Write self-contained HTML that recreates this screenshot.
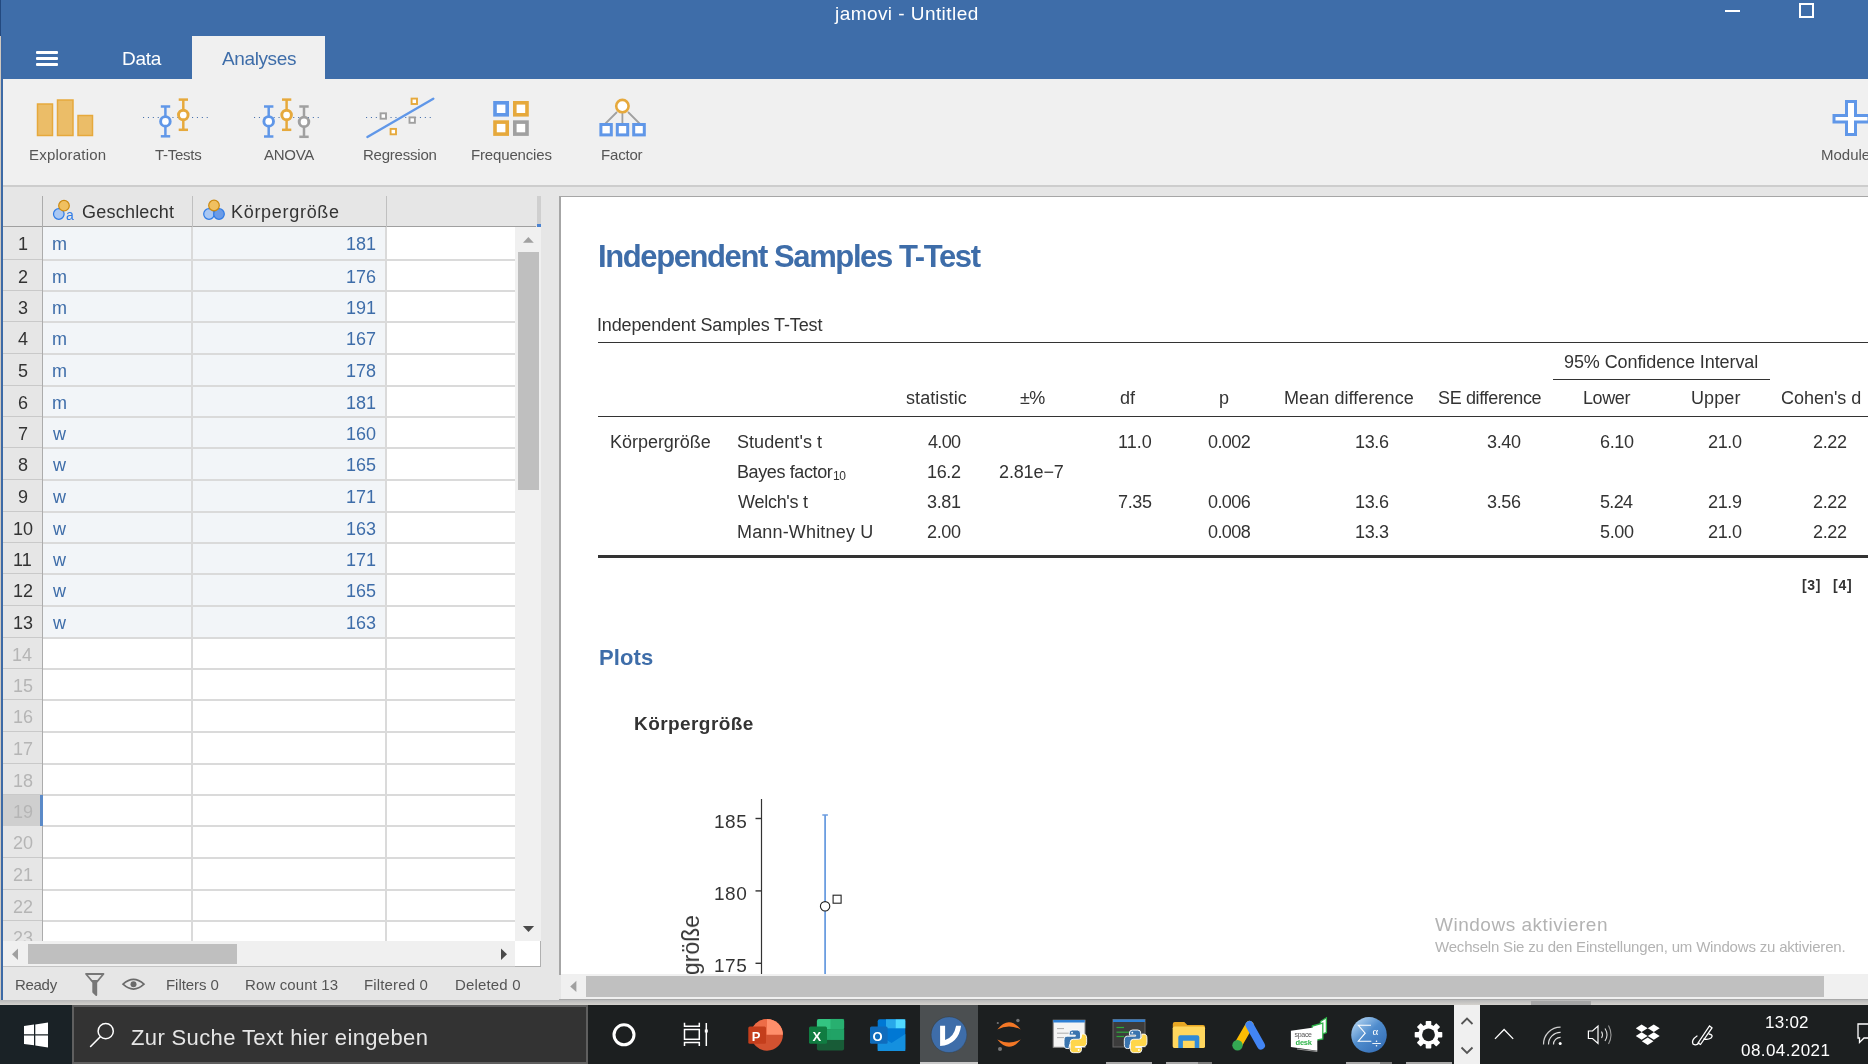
<!DOCTYPE html>
<html><head><meta charset="utf-8">
<style>
*{margin:0;padding:0;box-sizing:border-box}
html,body{width:1868px;height:1064px;overflow:hidden;background:#e6e6e6;font-family:"Liberation Sans",sans-serif;position:relative}
.a{position:absolute}
.t{position:absolute;white-space:nowrap;line-height:1;will-change:transform}
svg{position:absolute;overflow:visible}
</style></head><body>

<div class="a" style="left:0;top:0;width:1868px;height:79px;background:#3e6da9"></div>
<div class="a" style="left:0;top:0;width:1px;height:36px;background:#23497f"></div>
<div class="t" style="left:834.50px;top:4px;font-size:19px;color:#fff;letter-spacing:0.438px">jamovi - Untitled</div>
<div class="a" style="left:1725px;top:10px;width:15px;height:2px;background:#fff"></div>
<div class="a" style="left:1799px;top:3px;width:15px;height:15px;border:2px solid #fff"></div>
<div class="a" style="left:36px;top:51px;width:22px;height:3px;background:#fff;border-radius:1px"></div>
<div class="a" style="left:36px;top:57px;width:22px;height:3px;background:#fff;border-radius:1px"></div>
<div class="a" style="left:36px;top:63px;width:22px;height:3px;background:#fff;border-radius:1px"></div>
<div class="t" style="left:122.10px;top:49px;font-size:19px;color:#fff;letter-spacing:-0.233px">Data</div>
<div class="a" style="left:192px;top:36px;width:133px;height:44px;background:#f0f0f0"></div>
<div class="t" style="left:222.00px;top:49px;font-size:19px;color:#3e6da9;letter-spacing:-0.386px">Analyses</div>
<div class="a" style="left:3px;top:79px;width:1865px;height:106px;background:#f0f0f0"></div>
<div class="a" style="left:3px;top:185px;width:1865px;height:2px;background:#cdcdcd"></div>
<svg class="a" style="left:0;top:0" width="1868" height="186" viewBox="0 0 1868 186">
<g fill="#ebbd68" stroke="#e6a93c" stroke-width="1.5">
<rect x="37.5" y="104" width="15" height="31.5"/>
<rect x="57.5" y="100" width="15.5" height="35.5"/>
<rect x="78" y="115.5" width="14.5" height="20"/>
</g>
<!-- t-tests -->
<line x1="143" y1="117.5" x2="210" y2="117.5" stroke="#4a72ac" stroke-width="1.1" stroke-dasharray="1.1 3.8"/>
<g stroke="#6097e8" stroke-width="2.5" fill="#fff">
<line x1="165.4" y1="106" x2="165.4" y2="137"/><line x1="160.8" y1="106.5" x2="170.2" y2="106.5"/><line x1="160.8" y1="136.3" x2="170.2" y2="136.3"/>
<circle cx="165.4" cy="121.4" r="4.8" stroke-width="2.9"/>
</g>
<g stroke="#e6a93c" stroke-width="2.5" fill="#fff">
<line x1="183.3" y1="99" x2="183.3" y2="130.5"/><line x1="178.7" y1="99.6" x2="188" y2="99.6"/><line x1="178.7" y1="129.8" x2="188" y2="129.8"/>
<circle cx="183.3" cy="115" r="4.8" stroke-width="2.9"/>
</g>
<!-- anova -->
<line x1="254" y1="117.5" x2="321" y2="117.5" stroke="#4a72ac" stroke-width="1.1" stroke-dasharray="1.1 3.8"/>
<g stroke="#6097e8" stroke-width="2.5" fill="#fff">
<line x1="268.7" y1="106" x2="268.7" y2="137"/><line x1="264" y1="106.5" x2="273.4" y2="106.5"/><line x1="264" y1="136.5" x2="273.4" y2="136.5"/>
<circle cx="268.7" cy="121.4" r="4.8" stroke-width="2.9"/>
</g>
<g stroke="#e6a93c" stroke-width="2.5" fill="#fff">
<line x1="286.6" y1="99" x2="286.6" y2="130.5"/><line x1="282" y1="99.6" x2="291.3" y2="99.6"/><line x1="282" y1="129.8" x2="291.3" y2="129.8"/>
<circle cx="286.6" cy="115" r="4.8" stroke-width="2.9"/>
</g>
<g stroke="#a0a0a0" stroke-width="2.5" fill="#fff">
<line x1="304" y1="106" x2="304" y2="137.5"/><line x1="299.3" y1="106.5" x2="308.7" y2="106.5"/><line x1="299.3" y1="136.8" x2="308.7" y2="136.8"/>
<circle cx="304" cy="121.9" r="4.8" stroke-width="2.9"/>
</g>
<!-- regression -->
<line x1="366" y1="117.5" x2="434" y2="117.5" stroke="#4a72ac" stroke-width="1.1" stroke-dasharray="1.1 3.8"/>
<g fill="#fff" stroke-width="1.9">
<rect x="380.6" y="113.3" width="5.4" height="5.4" stroke="#a0a0a0"/>
<rect x="409.5" y="117.4" width="5.4" height="5.4" stroke="#a0a0a0"/>
<rect x="411.6" y="98.6" width="5.4" height="5.4" stroke="#e6a93c"/>
<rect x="390.6" y="128.9" width="5.4" height="5.4" stroke="#e6a93c"/>
</g>
<line x1="367.4" y1="137" x2="433.3" y2="98.7" stroke="#6097e8" stroke-width="2.4" stroke-linecap="round"/>
<!-- frequencies -->
<g fill="#fff" stroke-width="3.6">
<rect x="495" y="102.8" width="12.2" height="12" stroke="#6097e8"/>
<rect x="514.8" y="102.8" width="12.2" height="12" stroke="#e6a93c"/>
<rect x="495" y="122.1" width="12.2" height="12" stroke="#e6a93c"/>
<rect x="514.8" y="122.1" width="12.2" height="12" stroke="#a0a0a0"/>
</g>
<!-- factor -->
<g stroke="#a0a0a0" stroke-width="1.8">
<line x1="617" y1="112" x2="605" y2="124"/><line x1="622.4" y1="112" x2="622.4" y2="124"/><line x1="628" y1="112" x2="640" y2="124"/>
</g>
<circle cx="622.4" cy="106.1" r="6.2" fill="#fff" stroke="#e6a93c" stroke-width="2.6"/>
<g fill="#fff" stroke="#6097e8" stroke-width="3">
<rect x="600.9" y="124.5" width="10.4" height="10.4"/>
<rect x="617.3" y="124.5" width="10.4" height="10.4"/>
<rect x="633.7" y="124.5" width="10.6" height="10.4"/>
</g>
<!-- modules plus -->
<path d="M1846.5 101.5 H1855.5 V115.5 H1869 V122 H1855.5 V134.5 H1846.5 V122 H1834 V115.5 H1846.5 Z" fill="#fff" stroke="#6097e8" stroke-width="3"/>
</svg>
<div class="t" style="left:28.60px;top:147px;font-size:15px;color:#555;letter-spacing:0.200px">Exploration</div>
<div class="t" style="left:154.70px;top:147px;font-size:15px;color:#555;letter-spacing:-0.283px">T-Tests</div>
<div class="t" style="left:264.00px;top:147px;font-size:15px;color:#555;letter-spacing:-0.275px">ANOVA</div>
<div class="t" style="left:363.00px;top:147px;font-size:15px;color:#555;letter-spacing:-0.222px">Regression</div>
<div class="t" style="left:470.60px;top:147px;font-size:15px;color:#555;letter-spacing:-0.160px">Frequencies</div>
<div class="t" style="left:600.90px;top:147px;font-size:15px;color:#555;letter-spacing:-0.180px">Factor</div>
<div class="t" style="left:1821.00px;top:147px;font-size:15px;color:#555">Modules</div>
<div class="a" style="left:0;top:36px;width:1px;height:968px;background:#cfc8c0"></div>
<div class="a" style="left:1px;top:36px;width:2px;height:965px;background:#3d6aa6"></div>
<div class="a" style="left:3px;top:187px;width:556px;height:814px;background:#e6e6e6"></div>
<div class="a" style="left:3px;top:227px;width:39px;height:714px;background:#e6e6e6"></div>
<div class="a" style="left:42px;top:227px;width:473px;height:714px;background:#fff"></div>
<div class="a" style="left:42px;top:227px;width:344px;height:411px;background:#f2f5f8"></div>
<div class="a" style="left:42px;top:259px;width:473px;height:2px;background:#dadada"></div>
<div class="a" style="left:3px;top:259px;width:39px;height:1px;background:#c9c9c9"></div>
<div class="a" style="left:42px;top:290px;width:473px;height:2px;background:#dadada"></div>
<div class="a" style="left:3px;top:290px;width:39px;height:1px;background:#c9c9c9"></div>
<div class="a" style="left:42px;top:321px;width:473px;height:2px;background:#dadada"></div>
<div class="a" style="left:3px;top:321px;width:39px;height:1px;background:#c9c9c9"></div>
<div class="a" style="left:42px;top:353px;width:473px;height:2px;background:#dadada"></div>
<div class="a" style="left:3px;top:353px;width:39px;height:1px;background:#c9c9c9"></div>
<div class="a" style="left:42px;top:385px;width:473px;height:2px;background:#dadada"></div>
<div class="a" style="left:3px;top:385px;width:39px;height:1px;background:#c9c9c9"></div>
<div class="a" style="left:42px;top:416px;width:473px;height:2px;background:#dadada"></div>
<div class="a" style="left:3px;top:416px;width:39px;height:1px;background:#c9c9c9"></div>
<div class="a" style="left:42px;top:447px;width:473px;height:2px;background:#dadada"></div>
<div class="a" style="left:3px;top:447px;width:39px;height:1px;background:#c9c9c9"></div>
<div class="a" style="left:42px;top:479px;width:473px;height:2px;background:#dadada"></div>
<div class="a" style="left:3px;top:479px;width:39px;height:1px;background:#c9c9c9"></div>
<div class="a" style="left:42px;top:511px;width:473px;height:2px;background:#dadada"></div>
<div class="a" style="left:3px;top:511px;width:39px;height:1px;background:#c9c9c9"></div>
<div class="a" style="left:42px;top:542px;width:473px;height:2px;background:#dadada"></div>
<div class="a" style="left:3px;top:542px;width:39px;height:1px;background:#c9c9c9"></div>
<div class="a" style="left:42px;top:573px;width:473px;height:2px;background:#dadada"></div>
<div class="a" style="left:3px;top:573px;width:39px;height:1px;background:#c9c9c9"></div>
<div class="a" style="left:42px;top:605px;width:473px;height:2px;background:#dadada"></div>
<div class="a" style="left:3px;top:605px;width:39px;height:1px;background:#c9c9c9"></div>
<div class="a" style="left:42px;top:637px;width:473px;height:2px;background:#dadada"></div>
<div class="a" style="left:3px;top:637px;width:39px;height:1px;background:#c9c9c9"></div>
<div class="a" style="left:42px;top:668px;width:473px;height:2px;background:#dadada"></div>
<div class="a" style="left:3px;top:668px;width:39px;height:1px;background:#c9c9c9"></div>
<div class="a" style="left:42px;top:699px;width:473px;height:2px;background:#dadada"></div>
<div class="a" style="left:3px;top:699px;width:39px;height:1px;background:#c9c9c9"></div>
<div class="a" style="left:42px;top:731px;width:473px;height:2px;background:#dadada"></div>
<div class="a" style="left:3px;top:731px;width:39px;height:1px;background:#c9c9c9"></div>
<div class="a" style="left:42px;top:763px;width:473px;height:2px;background:#dadada"></div>
<div class="a" style="left:3px;top:763px;width:39px;height:1px;background:#c9c9c9"></div>
<div class="a" style="left:42px;top:794px;width:473px;height:2px;background:#dadada"></div>
<div class="a" style="left:3px;top:794px;width:39px;height:1px;background:#c9c9c9"></div>
<div class="a" style="left:42px;top:825px;width:473px;height:2px;background:#dadada"></div>
<div class="a" style="left:3px;top:825px;width:39px;height:1px;background:#c9c9c9"></div>
<div class="a" style="left:42px;top:857px;width:473px;height:2px;background:#dadada"></div>
<div class="a" style="left:3px;top:857px;width:39px;height:1px;background:#c9c9c9"></div>
<div class="a" style="left:42px;top:889px;width:473px;height:2px;background:#dadada"></div>
<div class="a" style="left:3px;top:889px;width:39px;height:1px;background:#c9c9c9"></div>
<div class="a" style="left:42px;top:920px;width:473px;height:2px;background:#dadada"></div>
<div class="a" style="left:3px;top:920px;width:39px;height:1px;background:#c9c9c9"></div>
<div class="a" style="left:3px;top:226px;width:533px;height:1px;background:#a0a0a0"></div>
<div class="a" style="left:41.5px;top:196px;width:1.5px;height:745px;background:#acacac"></div>
<div class="a" style="left:191.5px;top:196px;width:1.5px;height:31px;background:#c0c0c0"></div>
<div class="a" style="left:191px;top:227px;width:2px;height:714px;background:#dadada"></div>
<div class="a" style="left:385.5px;top:196px;width:1.5px;height:31px;background:#c0c0c0"></div>
<div class="a" style="left:385px;top:227px;width:2px;height:714px;background:#dadada"></div>
<div class="a" style="left:3px;top:795px;width:39px;height:31px;background:#cfcfcf"></div>
<div class="a" style="left:40px;top:795px;width:3px;height:31px;background:#5b8ac8"></div>
<div class="a" style="left:537px;top:196px;width:4px;height:31px;background:#cfcfcf"></div>
<div class="a" style="left:537px;top:224px;width:4px;height:3px;background:#4a82d0"></div>
<svg class="a" style="left:0;top:0" width="560" height="230">
<circle cx="58.8" cy="214" r="5.3" fill="#a9c7f2" stroke="#2f7be6" stroke-width="1.2"/>
<circle cx="64" cy="205.7" r="5.3" fill="#f0c060" stroke="#cc8a10" stroke-width="1.2"/>
<circle cx="209" cy="214" r="5.3" fill="#a9c7f2" stroke="#2f7be6" stroke-width="1.2"/>
<circle cx="219" cy="214" r="5.3" fill="#6b9be6" stroke="#2f7be6" stroke-width="1.2"/>
<circle cx="214" cy="205.5" r="5.3" fill="#f0c060" stroke="#cc8a10" stroke-width="1.2"/>
</svg>
<div class="t" style="left:66.20px;top:207.8px;font-size:14px;color:#2f7be6">a</div>
<div class="t" style="left:81.60px;top:203px;font-size:18px;color:#333;letter-spacing:0.222px">Geschlecht</div>
<div class="t" style="left:231.30px;top:203px;font-size:18px;color:#333;letter-spacing:0.700px">Körpergröße</div>
<div class="t" style="left:17.50px;top:235px;font-size:18px;color:#333">1</div>
<div class="t" style="left:51.80px;top:235px;font-size:18px;color:#3e6da9">m</div>
<div class="t" style="left:345.70px;top:235px;font-size:18px;color:#3e6da9">181</div>
<div class="t" style="left:17.50px;top:268px;font-size:18px;color:#333">2</div>
<div class="t" style="left:51.80px;top:268px;font-size:18px;color:#3e6da9">m</div>
<div class="t" style="left:345.70px;top:268px;font-size:18px;color:#3e6da9">176</div>
<div class="t" style="left:17.50px;top:299px;font-size:18px;color:#333">3</div>
<div class="t" style="left:51.80px;top:299px;font-size:18px;color:#3e6da9">m</div>
<div class="t" style="left:345.70px;top:299px;font-size:18px;color:#3e6da9">191</div>
<div class="t" style="left:17.50px;top:330px;font-size:18px;color:#333">4</div>
<div class="t" style="left:51.80px;top:330px;font-size:18px;color:#3e6da9">m</div>
<div class="t" style="left:345.70px;top:330px;font-size:18px;color:#3e6da9">167</div>
<div class="t" style="left:17.50px;top:362px;font-size:18px;color:#333">5</div>
<div class="t" style="left:51.80px;top:362px;font-size:18px;color:#3e6da9">m</div>
<div class="t" style="left:345.70px;top:362px;font-size:18px;color:#3e6da9">178</div>
<div class="t" style="left:17.50px;top:394px;font-size:18px;color:#333">6</div>
<div class="t" style="left:51.80px;top:394px;font-size:18px;color:#3e6da9">m</div>
<div class="t" style="left:345.70px;top:394px;font-size:18px;color:#3e6da9">181</div>
<div class="t" style="left:17.50px;top:425px;font-size:18px;color:#333">7</div>
<div class="t" style="left:52.80px;top:425px;font-size:18px;color:#3e6da9">w</div>
<div class="t" style="left:345.70px;top:425px;font-size:18px;color:#3e6da9">160</div>
<div class="t" style="left:17.50px;top:456px;font-size:18px;color:#333">8</div>
<div class="t" style="left:52.80px;top:456px;font-size:18px;color:#3e6da9">w</div>
<div class="t" style="left:345.70px;top:456px;font-size:18px;color:#3e6da9">165</div>
<div class="t" style="left:17.50px;top:488px;font-size:18px;color:#333">9</div>
<div class="t" style="left:52.80px;top:488px;font-size:18px;color:#3e6da9">w</div>
<div class="t" style="left:345.70px;top:488px;font-size:18px;color:#3e6da9">171</div>
<div class="t" style="left:12.50px;top:520px;font-size:18px;color:#333">10</div>
<div class="t" style="left:52.80px;top:520px;font-size:18px;color:#3e6da9">w</div>
<div class="t" style="left:345.70px;top:520px;font-size:18px;color:#3e6da9">163</div>
<div class="t" style="left:13.00px;top:551px;font-size:18px;color:#333">11</div>
<div class="t" style="left:52.80px;top:551px;font-size:18px;color:#3e6da9">w</div>
<div class="t" style="left:345.70px;top:551px;font-size:18px;color:#3e6da9">171</div>
<div class="t" style="left:12.50px;top:582px;font-size:18px;color:#333">12</div>
<div class="t" style="left:52.80px;top:582px;font-size:18px;color:#3e6da9">w</div>
<div class="t" style="left:345.70px;top:582px;font-size:18px;color:#3e6da9">165</div>
<div class="t" style="left:12.50px;top:614px;font-size:18px;color:#333">13</div>
<div class="t" style="left:52.80px;top:614px;font-size:18px;color:#3e6da9">w</div>
<div class="t" style="left:345.70px;top:614px;font-size:18px;color:#3e6da9">163</div>
<div class="t" style="left:12.00px;top:646px;font-size:18px;color:#b5b5b5">14</div>
<div class="t" style="left:12.50px;top:677px;font-size:18px;color:#b5b5b5">15</div>
<div class="t" style="left:12.50px;top:708px;font-size:18px;color:#b5b5b5">16</div>
<div class="t" style="left:12.50px;top:740px;font-size:18px;color:#b5b5b5">17</div>
<div class="t" style="left:12.50px;top:772px;font-size:18px;color:#b5b5b5">18</div>
<div class="t" style="left:12.50px;top:803px;font-size:18px;color:#b5b5b5">19</div>
<div class="t" style="left:12.50px;top:834px;font-size:18px;color:#b5b5b5">20</div>
<div class="t" style="left:12.50px;top:866px;font-size:18px;color:#b5b5b5">21</div>
<div class="t" style="left:12.50px;top:898px;font-size:18px;color:#b5b5b5">22</div>
<div class="t" style="left:12.50px;top:929px;font-size:18px;color:#b5b5b5">23</div>
<div class="a" style="left:515px;top:227px;width:26px;height:714px;background:#f0f0f0"></div>
<div class="a" style="left:518px;top:252px;width:21px;height:238px;background:#bfbfbf"></div>
<div class="a" style="left:3px;top:941px;width:512px;height:26px;background:#f0f0f0;border-bottom:1px solid #c4c4c4"></div>
<div class="a" style="left:28px;top:944px;width:209px;height:20px;background:#bfbfbf"></div>
<div class="a" style="left:515px;top:941px;width:26px;height:26px;background:#fff;border-right:1.5px solid #b0b0b0;border-bottom:1.5px solid #b0b0b0"></div>
<svg class="a" style="left:0;top:0" width="560" height="1000"><path d="M523 242.8 L528.4 237 L533.8 242.8 Z" fill="#a0a0a0"/><path d="M522.9 926 L534.1 926 L528.5 932 Z" fill="#4a4a4a"/><path d="M501 948.6 L507 954.3 L501 960 Z" fill="#4a4a4a"/><path d="M18 948.6 L12 954.3 L18 960 Z" fill="#a0a0a0"/></svg>
<div class="t" style="left:15.20px;top:977px;font-size:15px;color:#555;letter-spacing:-0.300px">Ready</div>
<div class="t" style="left:165.50px;top:977px;font-size:15px;color:#555;letter-spacing:-0.050px">Filters 0</div>
<div class="t" style="left:244.90px;top:977px;font-size:15px;color:#555;letter-spacing:0.118px">Row count 13</div>
<div class="t" style="left:364.30px;top:977px;font-size:15px;color:#555;letter-spacing:0.156px">Filtered 0</div>
<div class="t" style="left:454.90px;top:977px;font-size:15px;color:#555;letter-spacing:0.162px">Deleted 0</div>
<svg class="a" style="left:0;top:0" width="560" height="1004">
<path d="M86 974 H103.5 L96.3 982.5 V995 L93.2 992 V982.5 Z" fill="none" stroke="#777" stroke-width="1.8" stroke-linejoin="round"/><path d="M90.5 980 H99.5 L96.3 983 V995 L93.2 992 V983 Z" fill="#777"/>
<path d="M123 984.2 Q133.5 974.5 144 984.2 Q133.5 993.9 123 984.2 Z" fill="none" stroke="#6a6a6a" stroke-width="1.6"/>
<circle cx="133.5" cy="984.2" r="3" fill="#6a6a6a"/>
</svg>
<div class="a" style="left:559px;top:196px;width:1309px;height:779px;background:#fff;border-left:2px solid #a6a6a6;border-top:1.5px solid #a6a6a6"></div>
<div class="t" style="left:597.60px;top:241px;font-size:31px;color:#3e6da9;font-weight:bold;letter-spacing:-1.400px">Independent Samples T-Test</div>
<div class="t" style="left:597.00px;top:316px;font-size:18px;color:#333;letter-spacing:-0.136px">Independent Samples T-Test</div>
<div class="a" style="left:598px;top:342px;width:1270px;height:1px;background:#333"></div>
<div class="t" style="left:1564.15px;top:353px;font-size:18px;color:#333;letter-spacing:-0.086px">95% Confidence Interval</div>
<div class="a" style="left:1553px;top:379px;width:217px;height:1px;background:#333"></div>
<div class="t" style="left:905.65px;top:389px;font-size:18px;color:#333;letter-spacing:0.088px">statistic</div>
<div class="t" style="left:1020.20px;top:389px;font-size:18px;color:#333;letter-spacing:-0.600px">±%</div>
<div class="t" style="left:1120.20px;top:389px;font-size:18px;color:#333">df</div>
<div class="t" style="left:1219.30px;top:389px;font-size:18px;color:#333">p</div>
<div class="t" style="left:1284.40px;top:389px;font-size:18px;color:#333;letter-spacing:0.071px">Mean difference</div>
<div class="t" style="left:1437.70px;top:389px;font-size:18px;color:#333;letter-spacing:-0.350px">SE difference</div>
<div class="t" style="left:1582.70px;top:389px;font-size:18px;color:#333;letter-spacing:-0.400px">Lower</div>
<div class="t" style="left:1690.60px;top:389px;font-size:18px;color:#333;letter-spacing:0.100px">Upper</div>
<div class="t" style="left:1781.20px;top:389px;font-size:18px;color:#333;letter-spacing:-0.025px">Cohen's d</div>
<div class="a" style="left:598px;top:416px;width:1270px;height:1px;background:#333"></div>
<div class="t" style="left:609.60px;top:433px;font-size:18px;color:#333;letter-spacing:-0.030px">Körpergröße</div>
<div class="t" style="left:736.50px;top:433px;font-size:18px;color:#333;letter-spacing:0.050px">Student's t</div>
<div class="t" style="left:736.50px;top:463px;font-size:18px;color:#333;letter-spacing:-0.391px">Bayes factor</div>
<div class="t" style="left:833.00px;top:470px;font-size:12px;color:#333;letter-spacing:-0.500px">10</div>
<div class="t" style="left:737.50px;top:493px;font-size:18px;color:#333;letter-spacing:-0.262px">Welch's t</div>
<div class="t" style="left:736.50px;top:523px;font-size:18px;color:#333;letter-spacing:0.169px">Mann-Whitney U</div>
<div class="t" style="left:927.60px;top:433px;font-size:18px;color:#333;letter-spacing:-0.667px">4.00</div>
<div class="t" style="left:1118.20px;top:433px;font-size:18px;color:#333">11.0</div>
<div class="t" style="left:1208.00px;top:433px;font-size:18px;color:#333;letter-spacing:-0.575px">0.002</div>
<div class="t" style="left:1354.80px;top:433px;font-size:18px;color:#333;letter-spacing:-0.333px">13.6</div>
<div class="t" style="left:1487.30px;top:433px;font-size:18px;color:#333;letter-spacing:-0.333px">3.40</div>
<div class="t" style="left:1600.30px;top:433px;font-size:18px;color:#333;letter-spacing:-0.333px">6.10</div>
<div class="t" style="left:1708.20px;top:433px;font-size:18px;color:#333;letter-spacing:-0.333px">21.0</div>
<div class="t" style="left:1813.20px;top:433px;font-size:18px;color:#333;letter-spacing:-0.333px">2.22</div>
<div class="t" style="left:926.60px;top:463px;font-size:18px;color:#333;letter-spacing:-0.333px">16.2</div>
<div class="t" style="left:998.90px;top:463px;font-size:18px;color:#333;letter-spacing:-0.133px">2.81e−7</div>
<div class="t" style="left:926.60px;top:493px;font-size:18px;color:#333;letter-spacing:-0.333px">3.81</div>
<div class="t" style="left:1118.20px;top:493px;font-size:18px;color:#333;letter-spacing:-0.333px">7.35</div>
<div class="t" style="left:1208.00px;top:493px;font-size:18px;color:#333;letter-spacing:-0.575px">0.006</div>
<div class="t" style="left:1354.80px;top:493px;font-size:18px;color:#333;letter-spacing:-0.333px">13.6</div>
<div class="t" style="left:1487.30px;top:493px;font-size:18px;color:#333;letter-spacing:-0.333px">3.56</div>
<div class="t" style="left:1600.30px;top:493px;font-size:18px;color:#333;letter-spacing:-0.667px">5.24</div>
<div class="t" style="left:1708.20px;top:493px;font-size:18px;color:#333;letter-spacing:-0.333px">21.9</div>
<div class="t" style="left:1813.20px;top:493px;font-size:18px;color:#333;letter-spacing:-0.333px">2.22</div>
<div class="t" style="left:926.60px;top:523px;font-size:18px;color:#333;letter-spacing:-0.333px">2.00</div>
<div class="t" style="left:1208.00px;top:523px;font-size:18px;color:#333;letter-spacing:-0.575px">0.008</div>
<div class="t" style="left:1354.80px;top:523px;font-size:18px;color:#333;letter-spacing:-0.333px">13.3</div>
<div class="t" style="left:1600.30px;top:523px;font-size:18px;color:#333;letter-spacing:-0.333px">5.00</div>
<div class="t" style="left:1708.20px;top:523px;font-size:18px;color:#333;letter-spacing:-0.333px">21.0</div>
<div class="t" style="left:1813.20px;top:523px;font-size:18px;color:#333;letter-spacing:-0.333px">2.22</div>
<div class="a" style="left:598px;top:555px;width:1270px;height:3px;background:#333"></div>
<div class="t" style="left:1801.60px;top:578px;font-size:14px;color:#333;font-weight:bold;letter-spacing:0.650px">[3]</div>
<div class="t" style="left:1833.20px;top:578px;font-size:14px;color:#333;font-weight:bold;letter-spacing:0.750px">[4]</div>
<div class="t" style="left:598.60px;top:647px;font-size:22px;color:#3e6da9;font-weight:bold;letter-spacing:0.100px">Plots</div>
<div class="t" style="left:634.10px;top:714px;font-size:19px;color:#333;font-weight:bold;letter-spacing:0.430px">Körpergröße</div>
<svg class="a" style="left:0;top:0" width="1868" height="975">
<line x1="761.5" y1="799" x2="761.5" y2="975" stroke="#333" stroke-width="1.2"/>
<g stroke="#333" stroke-width="1.4"><line x1="755.5" y1="818.5" x2="761.5" y2="818.5"/><line x1="755.5" y1="890.9" x2="761.5" y2="890.9"/><line x1="755.5" y1="963.3" x2="761.5" y2="963.3"/></g>
<line x1="825.1" y1="815" x2="825.1" y2="975" stroke="#6b9de0" stroke-width="1.8"/>
<line x1="822.3" y1="815" x2="827.9" y2="815" stroke="#6b9de0" stroke-width="1.5"/>
<circle cx="825.1" cy="906.3" r="4.7" fill="#fff" stroke="#222" stroke-width="1.1"/>
<rect x="833.1" y="895.2" width="8" height="8" fill="#fff" stroke="#222" stroke-width="1.1"/>
</svg>
<div class="t" style="left:714.10px;top:812px;font-size:19px;color:#333;letter-spacing:0.500px">185</div>
<div class="t" style="left:714.10px;top:884px;font-size:19px;color:#333;letter-spacing:0.500px">180</div>
<div class="t" style="left:714.10px;top:956px;font-size:19px;color:#333;letter-spacing:0.500px">175</div>
<div class="a" style="left:600px;top:700px;width:200px;height:274px;overflow:hidden"><div class="t" style="left:99px;top:215px;font-size:23px;color:#333;transform-origin:0 0;transform:rotate(-90deg) translate(-100%,-19px)">Körpergröße</div></div>
<div class="t" style="left:1435.00px;top:915px;font-size:19px;color:#b3b3b3;letter-spacing:0.518px">Windows aktivieren</div>
<div class="t" style="left:1435.00px;top:939px;font-size:15px;color:#b3b3b3;letter-spacing:-0.186px">Wechseln Sie zu den Einstellungen, um Windows zu aktivieren.</div>
<div class="a" style="left:561px;top:974px;width:1307px;height:25px;background:#f0f0f0"></div>
<div class="a" style="left:586px;top:976px;width:1238px;height:21px;background:#c0c0c0"></div>
<svg class="a" style="left:0;top:0" width="1868" height="1004"><path d="M576.4 980.8 L570.2 986.4 L576.4 992 Z" fill="#a0a0a0"/></svg>
<div class="a" style="left:559px;top:999px;width:1309px;height:1px;background:#a8a8a8"></div>
<div class="a" style="left:0;top:1000px;width:1868px;height:5px;background:linear-gradient(#b8b8b8,#d4d2ce)"></div>
<div class="a" style="left:1531px;top:1001px;width:60px;height:3.5px;background:#a6a6a6"></div>
<div class="a" style="left:0;top:1005px;width:1868px;height:59px;background:#1c1f20"></div>
<div class="a" style="left:0;top:1005px;width:72px;height:59px;background:#1a2226"></div>
<div class="a" style="left:72px;top:1005px;width:516px;height:59px;background:#333;border:2px solid #5f5f5f"></div>
<div class="t" style="left:130.70px;top:1027px;font-size:22px;color:#e6e6e6;letter-spacing:0.367px">Zur Suche Text hier eingeben</div>
<div class="a" style="left:920px;top:1005px;width:58px;height:59px;background:#4b4f51"></div>
<div class="a" style="left:1454px;top:1005px;width:26px;height:59px;background:#f0f0f0"></div>
<div class="a" style="left:920px;top:1062px;width:58px;height:2px;background:#c8c8c8"></div>
<div class="a" style="left:1106px;top:1062px;width:46px;height:2px;background:#a8a8a8"></div>
<div class="a" style="left:1166px;top:1062px;width:32px;height:2px;background:#a8a8a8"></div>
<div class="a" style="left:1198px;top:1062px;width:14px;height:2px;background:#7a7a7a"></div>
<div class="a" style="left:1346px;top:1062px;width:34px;height:2px;background:#a8a8a8"></div>
<div class="a" style="left:1380px;top:1062px;width:12px;height:2px;background:#7a7a7a"></div>
<div class="a" style="left:1406px;top:1062px;width:46px;height:2px;background:#a8a8a8"></div>
<svg class="a" style="left:0;top:0" width="1868" height="1064" viewBox="0 0 1868 1064">
<!-- windows logo -->
<g fill="#fff">
<path d="M24 1026 L34 1024.6 V1034.3 H24 Z"/>
<path d="M35.3 1024.4 L48 1022.6 V1034.3 H35.3 Z"/>
<path d="M24 1035.6 H34 V1045.3 L24 1043.9 Z"/>
<path d="M35.3 1035.6 H48 V1047.4 L35.3 1045.5 Z"/>
</g>
<!-- search icon -->
<circle cx="105.7" cy="1031.2" r="7.6" fill="none" stroke="#fff" stroke-width="1.5"/>
<line x1="100.3" y1="1036.8" x2="90.6" y2="1046.5" stroke="#fff" stroke-width="1.6" stroke-linecap="round"/>
<!-- cortana -->
<circle cx="624" cy="1034.8" r="10" fill="none" stroke="#fff" stroke-width="3"/>
<!-- task view -->
<g fill="none" stroke="#fff" stroke-width="1.5">
<path d="M684.5 1022.8 V1026.3 H699.3 V1022.8"/>
<rect x="684.5" y="1029.5" width="14.8" height="9.8"/>
<path d="M684.5 1046 V1042.5 H699.3 V1046"/>
<line x1="706.3" y1="1023" x2="706.3" y2="1046"/>
</g>
<rect x="704.8" y="1029.5" width="3" height="3" fill="#fff"/>
<!-- powerpoint -->
<circle cx="767" cy="1034.8" r="15.9" fill="#d35230"/>
<path d="M767 1018.9 A15.9 15.9 0 0 1 782.9 1034.8 H767 Z" fill="#ff8f6b"/>
<path d="M767 1018.9 A15.9 15.9 0 0 0 751.1 1034.8 H767 Z" fill="#ed6c47"/>
<rect x="748.3" y="1026.4" width="17.7" height="17.3" rx="1.5" fill="#c43e1c"/>
<text x="751.8" y="1040.5" font-family="Liberation Sans" font-weight="bold" font-size="13" fill="#fff">P</text>
<!-- excel -->
<rect x="816.9" y="1018.9" width="27.2" height="31.6" rx="2" fill="#185c37"/>
<rect x="816.9" y="1018.9" width="27.2" height="10.5" rx="2" fill="#33c481"/>
<rect x="816.9" y="1029.4" width="27.2" height="10.5" fill="#21a366"/>
<rect x="830.5" y="1018.9" width="13.6" height="21" fill="#21a366" opacity="0.6"/>
<rect x="809" y="1026.4" width="18" height="17.3" rx="1.5" fill="#107c41"/>
<text x="812.5" y="1040.5" font-family="Liberation Sans" font-weight="bold" font-size="13" fill="#fff">X</text>
<!-- outlook -->
<rect x="877.7" y="1019.3" width="27.6" height="31.6" rx="2" fill="#0078d4"/>
<rect x="886" y="1019.3" width="9.5" height="9" fill="#28a8ea"/>
<rect x="895.5" y="1019.3" width="9.8" height="9" fill="#50d9ff"/>
<path d="M877.7 1034 L891.5 1043 L905.3 1034 V1050.9 H877.7 Z" fill="#1490df"/>
<rect x="870" y="1026.5" width="17.6" height="17.3" rx="1.5" fill="#0f6cbd"/>
<text x="872.6" y="1040.5" font-family="Liberation Sans" font-weight="bold" font-size="13" fill="#fff">O</text>
<!-- jamovi -->
<circle cx="949.1" cy="1034.8" r="17.8" fill="#3e6da9"/>
<circle cx="948.9" cy="1034.7" r="17.9" fill="none" stroke="#2a3a4a" stroke-width="0.6" opacity="0.6"/><path d="M940.1 1025.8 H945.1 V1039.9 Q954 1037.5 956.1 1025.8 H961.1 Q958.5 1044.5 940.1 1046.1 Z" fill="#fff"/>
<!-- jupyter -->
<path d="M997.3 1029.5 Q1009 1015 1020.7 1029.5 Q1009 1023.5 997.3 1029.5 Z" fill="#f37726"/>
<path d="M997.3 1039.5 Q1009 1054 1020.7 1039.5 Q1009 1045.5 997.3 1039.5 Z" fill="#f37726"/>
<circle cx="1017.9" cy="1020.5" r="1.7" fill="#767677"/>
<circle cx="997.8" cy="1023" r="1.1" fill="#767677"/>
<circle cx="1000" cy="1049" r="2" fill="#767677"/>
<!-- python idle -->
<rect x="1053.2" y="1020.2" width="31.8" height="27.1" fill="#f4f4f4" stroke="#888" stroke-width="1"/>
<rect x="1053.2" y="1020" width="31.6" height="2.5" fill="#2d7fd4"/>
<g stroke="#999" stroke-width="0.8"><line x1="1057" y1="1028.6" x2="1064" y2="1028.6"/><line x1="1057" y1="1033.2" x2="1069" y2="1033.2"/><line x1="1057" y1="1037.6" x2="1064" y2="1037.6"/></g>
<!-- python terminal -->
<rect x="1113" y="1019.5" width="32" height="27.5" fill="#3c3c3c" stroke="#666" stroke-width="1"/>
<rect x="1113" y="1019.5" width="32" height="2.5" fill="#2d7fd4"/>
<g stroke="#2fa83a" stroke-width="1.2"><line x1="1116.5" y1="1027.5" x2="1124" y2="1027.5"/><line x1="1116.5" y1="1032.2" x2="1130" y2="1032.2"/><line x1="1116.5" y1="1036.5" x2="1124" y2="1036.5"/></g>
<!-- python logos -->
<g transform="translate(1064 1030) scale(1.03)" stroke="#fff" stroke-width="0.9" stroke-linejoin="round">
<path d="M8 0 H13 Q16 0 16 3 V10 Q16 13 13 13 H8 Q5 13 5 16 V18 H3 Q0 18 0 14 V10 Q0 6 3 6 H11 V5 H5 V3 Q5 0 8 0 Z" fill="#3a74ae"/>
<path d="M14 22 H9 Q6 22 6 19 V12 Q6 9 9 9 H14 Q17 9 17 6 V4 H19 Q22 4 22 8 V12 Q22 16 19 16 H11 V17 H17 V19 Q17 22 14 22 Z" fill="#ffd64a"/>
<circle cx="7.8" cy="2.6" r="0.9" fill="#fff" stroke="none"/><circle cx="14.2" cy="19.4" r="0.9" fill="#fff" stroke="none"/>
</g>
<g transform="translate(1124.3 1030) scale(1.03)" stroke="#fff" stroke-width="0.9" stroke-linejoin="round">
<path d="M8 0 H13 Q16 0 16 3 V10 Q16 13 13 13 H8 Q5 13 5 16 V18 H3 Q0 18 0 14 V10 Q0 6 3 6 H11 V5 H5 V3 Q5 0 8 0 Z" fill="#3a74ae"/>
<path d="M14 22 H9 Q6 22 6 19 V12 Q6 9 9 9 H14 Q17 9 17 6 V4 H19 Q22 4 22 8 V12 Q22 16 19 16 H11 V17 H17 V19 Q17 22 14 22 Z" fill="#ffd64a"/>
<circle cx="7.8" cy="2.6" r="0.9" fill="#fff" stroke="none"/><circle cx="14.2" cy="19.4" r="0.9" fill="#fff" stroke="none"/>
</g>
<!-- folder -->
<path d="M1172.8 1024 a2 2 0 0 1 2 -2 h9.5 l3 3 h15.7 a2 2 0 0 1 2 2 v19 a2 2 0 0 1 -2 2 h-28.2 a2 2 0 0 1 -2 -2 Z" fill="#e8a723"/>
<rect x="1172.8" y="1026.5" width="32.2" height="21.5" rx="1.8" fill="#ffd75e"/>
<path d="M1178.3 1048 V1037.3 a2 2 0 0 1 2 -2 h17 a2 2 0 0 1 2 2 V1048 h-4.6 v-7.3 h-11.8 v7.3 Z" fill="#2f8ad8"/>
<!-- google ads -->
<line x1="1238" y1="1045" x2="1249.5" y2="1025" stroke="#fbbc04" stroke-width="8" stroke-linecap="round"/>
<line x1="1249.5" y1="1025" x2="1261" y2="1045.5" stroke="#4285f4" stroke-width="8" stroke-linecap="round"/>
<circle cx="1237.5" cy="1045.3" r="5.2" fill="#34a853"/>
<!-- spacedesk -->
<path d="M1320.5 1021.5 L1326.4 1017.8 V1032.5 L1320.5 1034.5 Z" fill="#fff" stroke="#2fb54a" stroke-width="1.3"/>
<path d="M1312.3 1026 L1322.8 1023.2 V1039 L1312.3 1041 Z" fill="#fff" stroke="#2fb54a" stroke-width="1.3"/>
<path d="M1290.9 1030.7 L1317.3 1027 V1050.7 L1290.9 1047 Z" fill="#fff"/>
<path d="M1297 1049 L1317.3 1051.5" stroke="#bbb" stroke-width="0.8"/>
<text x="1294.5" y="1037.2" font-family="Liberation Sans" font-size="7" fill="#555" letter-spacing="-0.3">space</text>
<text x="1295.5" y="1045" font-family="Liberation Sans" font-weight="bold" font-size="7.5" fill="#2fb54a" letter-spacing="-0.2">desk</text>
<!-- sigma -->
<defs><linearGradient id="sg" x1="0.15" y1="0.1" x2="0.85" y2="0.9"><stop offset="0" stop-color="#a9cdee"/><stop offset="0.45" stop-color="#4f8ccd"/><stop offset="1" stop-color="#3670b8"/></linearGradient></defs>
<circle cx="1369" cy="1034.9" r="17.8" fill="url(#sg)"/>
<path d="M1371 1025.3 H1358.3 L1365.2 1033.2 L1358.3 1041.2 H1371.3" fill="none" stroke="#fff" stroke-width="1.1"/>
<text x="1372.5" y="1034.8" font-family="Liberation Serif" font-size="11" fill="#fff">α</text>
<line x1="1372.3" y1="1043.5" x2="1380.8" y2="1043.5" stroke="#fff" stroke-width="0.9"/>
<circle cx="1376.5" cy="1041.3" r="0.8" fill="#fff"/><circle cx="1376.5" cy="1045.8" r="0.8" fill="#fff"/>
<!-- gear -->
<g transform="translate(1428.5 1034.8)" fill="#fff">
<circle r="10.2"/>
<rect x="-2.8" y="-13.8" width="5.6" height="5.5" rx="0.8"/>
<rect x="-2.8" y="-13.8" width="5.6" height="5.5" rx="0.8" transform="rotate(45)"/>
<rect x="-2.8" y="-13.8" width="5.6" height="5.5" rx="0.8" transform="rotate(90)"/>
<rect x="-2.8" y="-13.8" width="5.6" height="5.5" rx="0.8" transform="rotate(135)"/>
<rect x="-2.8" y="-13.8" width="5.6" height="5.5" rx="0.8" transform="rotate(180)"/>
<rect x="-2.8" y="-13.8" width="5.6" height="5.5" rx="0.8" transform="rotate(225)"/>
<rect x="-2.8" y="-13.8" width="5.6" height="5.5" rx="0.8" transform="rotate(270)"/>
<rect x="-2.8" y="-13.8" width="5.6" height="5.5" rx="0.8" transform="rotate(315)"/>
<circle r="6.4" fill="#1c1f20"/>
</g>
<!-- scroll chevrons -->
<g fill="none" stroke="#555" stroke-width="1.8">
<path d="M1461.5 1024 L1467 1018.5 L1472.5 1024"/>
<path d="M1461.5 1047.5 L1467 1053 L1472.5 1047.5"/>
</g>
<!-- tray caret -->
<path d="M1495 1038.9 L1504.1 1029.5 L1513.2 1038.9" fill="none" stroke="#fff" stroke-width="1.3"/>
<!-- wifi -->
<g fill="none" stroke="#e0e0e0" stroke-width="1.2">
<path d="M1543.5 1044.5 A17 17 0 0 1 1560.6 1027.2" stroke="#cfcfcf"/>
<path d="M1548.5 1044.5 A12 12 0 0 1 1560.6 1032.3"/>
<path d="M1553.5 1044.5 A7 7 0 0 1 1560.6 1037.4"/>
</g>
<circle cx="1560.2" cy="1043.5" r="1.5" fill="#fff"/>
<!-- volume -->
<path d="M1588.4 1031 H1592.5 L1598 1026 V1043.5 L1592.5 1038.5 H1588.4 Z" fill="none" stroke="#fff" stroke-width="1.2"/>
<g fill="none" stroke="#ddd" stroke-width="1.1">
<path d="M1601.5 1031.5 Q1603.5 1034.8 1601.5 1038"/>
<path d="M1605 1028.5 Q1609 1034.8 1605 1041"/>
<path d="M1608.5 1025.5 Q1613.5 1034.8 1608.5 1044" stroke="#999"/>
</g>
<!-- dropbox -->
<g fill="#fff">
<path d="M1641.6 1024.5 L1647.6 1028.3 L1641.6 1032 L1635.8 1028.3 Z"/>
<path d="M1653.8 1024.5 L1659.7 1028.3 L1653.8 1032 L1647.8 1028.3 Z"/>
<path d="M1641.6 1032.3 L1647.6 1036 L1641.6 1039.8 L1635.8 1036 Z"/>
<path d="M1653.8 1032.3 L1659.7 1036 L1653.8 1039.8 L1647.8 1036 Z"/>
<path d="M1647.7 1037.5 L1653.5 1041.3 L1647.7 1045 L1641.8 1041.3 Z"/>
</g>
<!-- pen -->
<g fill="none" stroke="#fff" stroke-width="1.3" stroke-linecap="round">
<path d="M1698 1043 L1709.5 1026 L1712 1027.8 L1700.5 1044.5 Z"/>
<path d="M1697 1036 Q1691 1040 1693 1044 Q1696 1046 1699 1043"/>
<path d="M1709 1034 Q1714 1035 1711 1038 Q1708 1040 1704 1039"/>
</g>
<!-- notification -->
<path d="M1858 1024 H1870 V1038 H1864 L1859.5 1042.4 V1038 H1858 Z" fill="none" stroke="#fff" stroke-width="1.3"/>
</svg>
<div class="t" style="left:1764.60px;top:1014px;font-size:17px;color:#fff;letter-spacing:0.250px">13:02</div>
<div class="t" style="left:1741.20px;top:1042px;font-size:17px;color:#fff;letter-spacing:0.422px">08.04.2021</div>
</body></html>
